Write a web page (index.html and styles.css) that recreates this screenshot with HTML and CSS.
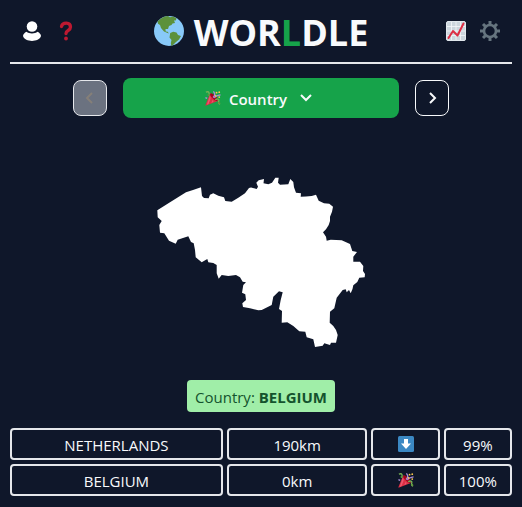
FILE: index.html
```html
<!DOCTYPE html>
<html lang="en">
<head>
<meta charset="utf-8">
<meta name="viewport" content="width=device-width, initial-scale=1">
<title>Worldle</title>
<link rel="stylesheet" href="styles.css">
</head>
<body>
<svg class="defs" aria-hidden="true">
  <symbol id="popper" viewBox="0 0 36 36">
    <path fill="#dd2e44" d="M11.6 7.6 1 33.5c-.5 1.3.2 2 1.500 1.500L29 24.500C27 17 19 9 11.600 7.600z"/>
    <path fill="#ea596e" d="M11 12 4 33l4-1.500L13 18zM18 21l-4 8 5-2z"/>
    <ellipse cx="20" cy="16" rx="4" ry="11" transform="rotate(-45 20 16)" fill="#a0041e"/>
    <path fill="none" stroke="#aa8dd8" stroke-width="3" d="M18 17c5-4 5-9 1-14M1 17l4 2"/>
    <path fill="none" stroke="#77b255" stroke-width="3" d="M2 5c7-3 9 1 6 8M23 22c4-3 9-2 8 2s-2 6 3 8"/>
    <path fill="none" stroke="#aa8dd8" stroke-width="3" d="M21 18c3-5 6-6 14-7"/>
    <path fill="#5c913b" d="M6 9h4v4H6zM30 27h4v4h-4z"/>
    <circle cx="26" cy="6" r="2" fill="#ffcc4d"/>
    <circle cx="32" cy="5" r="2" fill="#ffcc4d"/>
    <circle cx="32" cy="16" r="2" fill="#ffcc4d"/>
    <circle cx="24" cy="13" r="2" fill="#ffcc4d"/>
  </symbol>
</svg>
<div class="page">
  <header class="header">
    <div class="tools">
      <button class="tool" type="button" aria-label="Profile">
        <svg class="icon-m" viewBox="0 0 20 20"><circle cx="10" cy="5.500" r="5.300" fill="#fff"/><path fill="#fff" d="M4.500 10.700C7 13 13 13 15.500 10.700 17.500 11.500 19 13.500 19 15c-2 6.500-16 6.500-18 0 0-1.500 1.500-3.500 3.500-4.300z"/></svg>
      </button>
      <button class="tool" type="button" aria-label="Help">
        <svg class="icon-m" viewBox="0 0 20 20"><path fill="none" stroke="#be1931" stroke-width="3.300" stroke-linecap="round" d="M5.500 5.500C6.500 1 14.500 1 14.500 6c0 4-4.500 3-4.500 6.500"/><circle cx="10" cy="17.500" r="1.900" fill="#be1931"/></svg>
      </button>
    </div>
    <h1 class="title">
      <svg class="globe" viewBox="0 0 30 30" aria-hidden="true">
        <circle cx="15" cy="15" r="15" fill="#88c9f9"/>
        <path fill="#5c913b" d="M3.500 5.500C6 2.500 10 .3 14 0l2 1.200 3-.7 3.500 1.700-.7 2.300-1.800 0 1 2.500-2.500.500-1 1.500-2.500 1-1 3-2.500 0 .2 2.500 2 .2 1.200 1.800-1.400-.4-3.500-1.600-3-3.500L6 9l-2-1.200z"/>
        <path fill="#5c913b" d="m16.200 17 3-1.200 3.300.7 1.500 2.500 3 1-2 3.500-3 2.500-3 3-1.700 1-.5-3 .7-3-2-2.500z"/>
      </svg>
      <span class="name">WOR<span class="accent">L</span>DLE</span>
    </h1>
    <div class="tools">
      <button class="tool" type="button" aria-label="Stats">
        <svg class="icon-m" viewBox="0 0 20 20"><rect x=".5" y=".5" width="19" height="19" rx="1.500" fill="#ccd6dd" stroke="#e1e8ed"/><path stroke="#f5f8fa" stroke-width=".8" d="M5.500 1v18M10 1v18M14.500 1v18M1 5.500h18M1 10h18M1 14.500h18"/><path fill="none" stroke="#dd2e44" stroke-width="2" stroke-linecap="round" stroke-linejoin="round" d="m2.500 17 4.500-7 4.500 4.500 6-12"/></svg>
      </button>
      <button class="tool" type="button" aria-label="Settings">
        <svg class="icon-m" viewBox="0 0 20 20"><g fill="none" stroke="#66757f"><circle cx="10" cy="10" r="6" stroke-width="2.600"/><path stroke-width="3" d="M10 0v3.500M10 16.500V20M0 10h3.500M16.500 10H20M3 3l2.400 2.400M14.600 14.600 17 17M3 17l2.400-2.400M14.600 5.400 17 3"/></g></svg>
      </button>
    </div>
  </header>
  <main class="main">
    <nav class="rounds" aria-label="Rounds">
      <button class="step" type="button" disabled aria-label="Previous round">
        <svg class="chevron" viewBox="0 0 14 14"><path d="M9 2 4 7l5 5"/></svg>
      </button>
      <button class="round" type="button">
        <svg class="icon-s" aria-hidden="true"><use href="#popper"/></svg>
        <span class="label">Country</span>
        <svg class="chevron down" viewBox="0 0 14 14" aria-hidden="true"><path d="m2 4 5 5 5-5"/></svg>
      </button>
      <button class="step" type="button" aria-label="Next round">
        <svg class="chevron" viewBox="0 0 14 14"><path d="m5 2 5 5-5 5"/></svg>
      </button>
    </nav>
    <svg class="map" viewBox="157 177 208 171" role="img" aria-label="Country outline">
      <path d="M157.300 210.300 170 202.300 186 192.300 193 190 201 187.300 202 196 204 198 208.700 198.300 210 194.700 213.300 193.300 218.300 195.700 224 197.300 225.300 201 231.700 201.700 238.300 197.700 245 193.300 249 188 251 187.500 256.700 189 258 186.700 256.300 182.700 258.700 180.300 264 179 263.500 183.300 268.300 184.300 272 182.700 275.300 177.700 278.700 177.700 278 182.700 280 184.700 288.300 184.300 290.300 179 293.300 182 294 187.300 296 192.700 301 193.300 300.700 196.700 306 196.500 311.700 196 316 194.700 318.700 200.700 324 203.300 329.300 203.700 333 206.700 332 211.700 330 216.700 330 221 328.700 225 326 229.300 323 232.300 326 236.700 326.700 240.700 330.700 239.700 341.700 240.300 350 244 352.300 251 357 252 353.300 256.700 353.300 261.700 360 261.700 363.300 266 363 271 365 274 364.700 277.300 359.300 277.700 357.300 282 353.300 285.300 352.500 289 350.700 293.300 349 290 346.700 292.300 345.700 289.300 342.700 290 336.700 297.700 334.300 308.300 330 311.700 329.700 322.700 333.300 326 336 330 337.700 335 336 342.700 331 342.700 330 345 324.300 343.300 322.700 345.700 315 347 313.300 339.300 306.700 337.300 305.300 331.700 299.300 331.300 293.300 326 287.300 322.300 281.700 322.700 282 311 279 309 280.700 300 282.700 292.300 279 291.300 273.300 296.700 271.700 305 261.700 310 258.300 310.300 250 308.300 243 307 242.300 303.300 246 300 245.300 294.300 242 292.700 243.300 285 246 282.300 242.700 281.700 240 277.300 236 275 228.300 276 221.700 275 218.700 278.700 216.700 273.300 216.700 265 213.300 263 208.300 262.300 207.300 259 201.700 262.300 195.700 257.300 195 250 193.700 243.300 191 242 188.300 236.300 177.700 239.700 175.700 243.700 169 240.700 164.300 233.300 160 232.700 159.300 225 161.700 221 157.700 217.300z"/>
    </svg>
    <p class="answer">Country: <b>BELGIUM</b></p>
    <table class="guesses">
      <tbody>
        <tr><td>NETHERLANDS</td><td>190km</td><td class="direction"><svg class="icon-s" viewBox="0 0 16 16" role="img" aria-label="South"><rect width="16" height="16" rx="1.500" fill="#3b88c3"/><path fill="#fff" d="M6 3h4v4.500h3L8 13 3 7.500h3z"/></svg></td><td>99%</td></tr>
        <tr><td>BELGIUM</td><td>0km</td><td class="direction"><svg class="icon-s" role="img" aria-label="Correct"><use href="#popper"/></svg></td><td>100%</td></tr>
      </tbody>
    </table>
  </main>
</div>
</body>
</html>
```
FILE: styles.css
```css
* {
  box-sizing: border-box;
}

body {
  margin: 0;
  background: #0f172a;
  color: #f8fafc;
  font: 15px/24px "Open Sans", "Noto Sans", sans-serif;
}

button {
  padding: 0;
  border: 0;
  background: none;
  color: inherit;
  font: inherit;
}

svg {
  display: block;
}

.defs {
  display: none;
}

.page {
  max-width: 532px;
  margin: 0 auto;
  padding: 0 10px;
}

.header {
  display: flex;
  align-items: center;
  justify-content: space-between;
  height: 64px;
  border-bottom: 2px solid #e5e7eb;
}

.tools {
  display: flex;
  gap: 14px;
  padding: 0 12px;
}

.tool {
  display: grid;
  place-items: center;
}

.icon-m {
  width: 20px;
  height: 20px;
}

.icon-s {
  width: 16px;
  height: 16px;
}

.title {
  display: flex;
  align-items: center;
  gap: 10px;
  margin: 0;
  font-size: 36px;
  line-height: 40px;
  font-weight: 700;
}

.name {
  padding-top: 4px;
}

.globe {
  width: 30px;
  height: 30px;
}

.accent {
  color: #16a34a;
}

.main {
  display: flex;
  flex-direction: column;
  align-items: center;
}

.rounds {
  display: flex;
  align-items: center;
  gap: 16px;
  width: 75%;
  margin-top: 14px;
}

.step {
  display: grid;
  place-items: center;
  width: 34px;
  height: 36px;
  border: 1px solid #f8fafc;
  border-radius: 8px;
}

.step:disabled {
  background: #6b7280;
  border-color: #e5e7eb;
  color: #857f78;
}

.round {
  display: flex;
  flex: 1;
  align-items: center;
  justify-content: center;
  gap: 8px;
  height: 40px;
  border-radius: 8px;
  background: #16a34a;
  font-weight: 600;
}

.label {
  padding-top: 2px;
}

.chevron {
  width: 14px;
  height: 14px;
  fill: none;
  stroke: currentColor;
  stroke-width: 2;
}

.down {
  margin: 0 4px;
}

.map {
  width: 208px;
  margin: 59px 0 32px;
  fill: #fff;
}

.answer {
  margin: 0 0 16px;
  padding: 5px 8px 3px;
  border-radius: 4px;
  background: #a0eea8;
  color: #14532d;
}

.guesses {
  display: block;
  width: 100%;
  padding-bottom: 10px;
}

.guesses tbody {
  display: grid;
  gap: 4px;
}

.guesses tr {
  display: grid;
  grid-template-columns: repeat(7, 1fr);
  gap: 4px;
}

.guesses td {
  display: flex;
  align-items: center;
  justify-content: center;
  height: 32px;
  padding: 2px 0 0;
  border: 2px solid #e5e7eb;
  border-radius: 4px;
}

.guesses td.direction {
  padding: 0;
}

.guesses td:nth-child(1) {
  grid-column: span 3;
}

.guesses td:nth-child(2) {
  grid-column: span 2;
}
```
